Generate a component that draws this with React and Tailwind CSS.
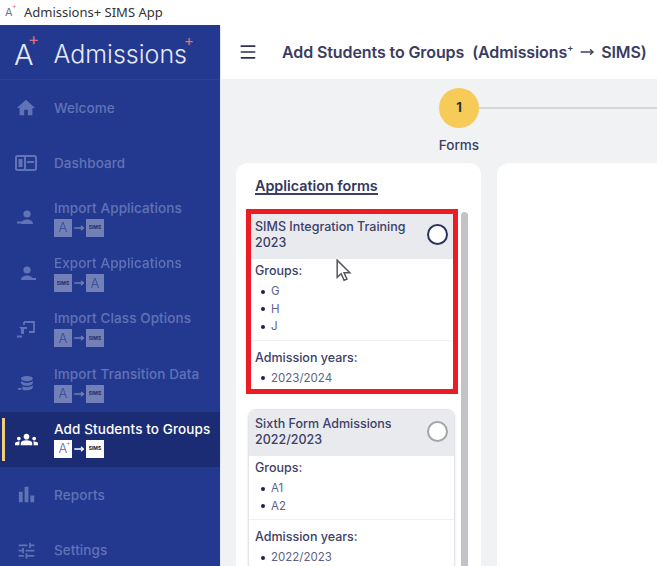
import { Menu, MoveRight } from 'lucide-react';
import { MdBarChart, MdGroups, MdHome, MdTune } from 'react-icons/md';

const PersonIcon = ({ dash }) => (
  <svg viewBox="0 0 20 18" className="h-[18px] w-5" fill="currentColor">
    <circle cx="11" cy="5" r="3.6" />
    <path d="M5 15c0-3 3-4.6 6-4.6s6 1.6 6 4.6z" />
    {dash === 'left' ? <rect x="1" y="12.5" width="5" height="2" /> : <rect x="14" y="13" width="6" height="2" />}
  </svg>
);

const DashboardIcon = () => (
  <svg viewBox="0 0 22 18" className="h-[18px] w-[22px]" fill="none" stroke="currentColor" strokeWidth="2">
    <rect x="1" y="2" width="20" height="14" rx="1.5" />
    <path d="M10 2v14" />
    <rect x="3.5" y="5" width="4" height="8" fill="currentColor" stroke="none" />
    <path d="M12 8h7" />
  </svg>
);

const ClassIcon = () => (
  <svg viewBox="0 0 20 20" className="h-5 w-5" fill="none" stroke="currentColor" strokeWidth="1.8">
    <path d="M8 3h10v10h-5" />
    <path d="M3 8h8v2H8v5H5v-5z" fill="currentColor" stroke="none" />
    <rect x="1" y="16.5" width="5" height="2" fill="currentColor" stroke="none" />
    <path d="M8 3v3" />
  </svg>
);

const DataIcon = () => (
  <svg viewBox="0 0 20 20" className="h-[18px] w-5" fill="currentColor">
    <ellipse cx="11" cy="4" rx="6.5" ry="3" />
    <path d="M4.5 6.5c1 1.6 3.6 2.4 6.5 2.4s5.5-.8 6.5-2.4V9c0 1.7-3 3-6.5 3s-6.5-1.3-6.5-3z" />
    <path d="M6 12.6c1.4.7 3.1 1 5 1s4.8-.7 6.5-2.2V14c0 1.7-3 3-6.5 3-1.9 0-3.7-.4-5-1z" />
    <rect x="1" y="14.5" width="4" height="2" />
  </svg>
);

const ATile = ({ active }) => (
  <span className="relative flex h-[18px] w-[18px] items-center justify-center bg-white font-['Inter',sans-serif] text-[13px] font-light leading-none text-[#5b6aa8]">
    A
    {active && <span className="absolute right-[1px] top-[-1px] text-[8px] text-[#e0707f]">+</span>}
  </span>
);

const SimsTile = () => (
  <span className="flex h-[18px] w-[18px] items-center justify-center bg-white font-['Inter',sans-serif] text-[5px] font-bold leading-none text-[#111827]">
    SIMS
  </span>
);

const Flow = ({ reverse, active }) => (
  <div className="mt-[3px] flex items-center gap-[2px]">
    {reverse ? <SimsTile /> : <ATile active={active} />}
    <MoveRight size={10} strokeWidth={3.5} className="text-white" />
    {reverse ? <ATile active={active} /> : <SimsTile />}
  </div>
);

const navItems = [
  { name: 'Welcome', icon: <MdHome size={22} /> },
  { name: 'Dashboard', icon: <DashboardIcon /> },
  { name: 'Import Applications', icon: <PersonIcon dash="left" />, flow: true },
  { name: 'Export Applications', icon: <PersonIcon dash="right" />, flow: true, reverse: true },
  { name: 'Import Class Options', icon: <ClassIcon />, flow: true },
  { name: 'Import Transition Data', icon: <DataIcon />, flow: true },
  { name: 'Add Students to Groups', icon: <MdGroups size={23} />, flow: true, active: true },
  { name: 'Reports', icon: <MdBarChart size={23} /> },
  { name: 'Settings', icon: <MdTune size={21} /> },
];

const forms = [
  { title: 'SIMS Integration Training 2023', groups: ['G', 'H', 'J'], years: ['2023/2024'], selected: true },
  { title: 'Sixth Form Admissions 2022/2023', groups: ['A1', 'A2'], years: ['2022/2023'] },
];

const Bullets = ({ items }) => (
  <ul className="mt-[4px]">
    {items.map((item) => (
      <li key={item} className="flex h-[17.5px] items-center text-[11.5px] text-[#5c6384]">
        <span className="ml-[6px] mr-[6px] h-[4px] w-[4px] rounded-full bg-[#1c2350]" />
        {item}
      </li>
    ))}
  </ul>
);

const FormCard = ({ form }) => (
  <div className="relative w-[207px] overflow-hidden rounded-lg border border-[#e4e5ea] bg-white text-[#3c4066] shadow-sm">
    <div className="flex h-[46px] items-center justify-between bg-[#e9eaee] px-[6px] pb-[3px]">
      <div className="w-[165px] text-[12.5px] font-medium leading-[15.5px]">{form.title}</div>
      <span
        className={`h-[21px] w-[21px] rounded-full bg-white ${
          form.selected ? 'border-2 border-[#2b3160]' : 'border-2 border-[#a3a5ab]'
        }`}
      />
    </div>
    <div className="border-b border-[#f0f0f3] pb-[4px] pl-[6px] pt-[4px]">
      <div className="text-[12.5px] font-medium leading-4">Groups:</div>
      <Bullets items={form.groups} />
    </div>
    <div className="pb-[3px] pl-[6px] pt-[9px]">
      <div className="text-[12.5px] font-medium leading-4">Admission years:</div>
      <div className="mt-[3px]">
        <Bullets items={form.years} />
      </div>
    </div>
  </div>
);

const App = () => {
  return (
    <div className="flex h-[566px] w-[657px] flex-col overflow-hidden bg-white font-['Inter',sans-serif] blur-[0.5px]">
      {/* Title bar */}
      <div className="flex h-[25px] shrink-0 items-center pl-[5px] font-['Noto_Sans',sans-serif] text-[13px] text-[#333]">
        <span className="relative mr-[9px] w-[10px] font-['Inter',sans-serif] text-[11px] text-[#6a7196]">
          A
          <span className="absolute left-[7px] top-[-3px] text-[7px] text-[#e0707f]">+</span>
        </span>
        Admissions+ SIMS App
      </div>

      <div className="flex min-h-0 flex-1">
        {/* Sidebar */}
        <aside className="flex w-[220px] shrink-0 flex-col bg-[#23398f]">
          <div className="flex h-[55px] shrink-0 items-center border-b border-[#2c408f] pl-[14px] pt-[5px] text-[#e6e9f5]">
            <span className="relative text-[29px] font-light leading-none">
              A
              <span className="absolute left-[14px] top-[-9px] text-[17px] font-normal text-[#e0707f]">+</span>
            </span>
            <span className="relative ml-[20px] text-[25px] font-light leading-none">
              Admissions
              <span className="absolute right-[-7px] top-[-9px] text-[15px] font-normal text-[#e0707f]">+</span>
            </span>
          </div>
          <nav className="flex flex-col">
            {navItems.map((item) => (
              <div
                key={item.name}
                className={`relative flex h-[55.3px] shrink-0 items-center ${item.active ? 'bg-[#1b2c75] text-white' : 'text-[#8b99cf]'}`}
              >
                {item.active && <span className="absolute bottom-[6px] left-[2px] top-[6px] w-[3px] bg-[#efcf7f]" />}
                <div className={`flex w-[54px] shrink-0 justify-center pr-[2px] ${item.active ? '' : 'opacity-60'}`}>{item.icon}</div>
                <div className={item.active ? '' : 'opacity-60'}>
                  <div className="whitespace-nowrap text-[13.5px] font-medium leading-4 tracking-[0.1px]">{item.name}</div>
                  {item.flow && (
                    <div className={item.active ? '' : 'opacity-60'}>
                      <Flow reverse={item.reverse} active={item.active} />
                    </div>
                  )}
                </div>
              </div>
            ))}
          </nav>
        </aside>

        {/* Main Content */}
        <div className="flex min-w-0 flex-1 flex-col border-l border-[#e4e7f7] bg-[#f1f2f4]">
          <header className="flex h-[54px] shrink-0 items-center whitespace-nowrap bg-white pb-[1px] pl-[17px] text-[#3a3c62]">
            <Menu size={20} strokeWidth={2} className="mr-[24px] text-[#2f3158]" />
            <span className="text-[16px] font-semibold tracking-[-0.1px]">Add Students to Groups</span>
            <span className="ml-[8px] text-[16px] font-semibold tracking-[-0.1px]">(Admissions</span>
            <span className="mb-2 text-[9px] font-semibold">+</span>
            <MoveRight size={14} strokeWidth={2.5} className="mx-[7px]" />
            <span className="text-[16px] font-semibold tracking-[-0.1px]">SIMS)</span>
          </header>

          {/* Stepper */}
          <div className="flex h-[84px] shrink-0 items-start pl-[218px] pt-[9px]">
            <div className="flex w-10 shrink-0 flex-col items-center">
              <div className="flex h-10 w-10 items-center justify-center rounded-full bg-[#f6cb58] text-[13px] font-bold text-[#2c2c3a]">1</div>
              <div className="mt-[9px] whitespace-nowrap text-[13.5px] font-medium leading-4 text-[#3c4066]">Forms</div>
            </div>
            <div className="mt-[19px] h-[2px] flex-1 bg-[#d6d7da]" />
          </div>

          {/* Panels */}
          <div className="flex min-h-0 flex-1 gap-4 pl-[15px]">
            <section className="w-[245px] shrink-0 rounded-t-xl bg-white pl-3">
              <h2 className="ml-[7px] mt-[15px] inline-block border-b-2 border-[#3c4066] text-[14.3px] font-semibold leading-[15px] text-[#34375f]">
                Application forms
              </h2>
              <div className="mt-[15px] flex gap-[6px]">
                <div className="flex flex-col gap-[18px]">
                  {forms.map((form) => (
                    <div key={form.title} className="relative">
                      <FormCard form={form} />
                      {form.selected && (
                        <>
                          <div className="absolute bottom-[-3px] left-[-2px] right-[-3px] top-[-3px] border-[5px] border-[#ed1c24]" />
                          <svg viewBox="0 0 14 20" className="absolute left-[87px] top-[47px] h-[23px] w-[17px]">
                            <path d="M1.5 1v15l3.5-3.2 2.5 5.7 2.5-1-2.5-5.5h5z" fill="#fff" stroke="#55565c" strokeWidth="1.3" />
                          </svg>
                        </>
                      )}
                    </div>
                  ))}
                </div>
                <div className="h-[400px] w-[7px] shrink-0 rounded-t-full bg-[#c2c3c6]" />
              </div>
            </section>
            <section className="flex-1 rounded-tl-xl bg-white" />
          </div>
        </div>
      </div>
    </div>
  );
};

export default App;
